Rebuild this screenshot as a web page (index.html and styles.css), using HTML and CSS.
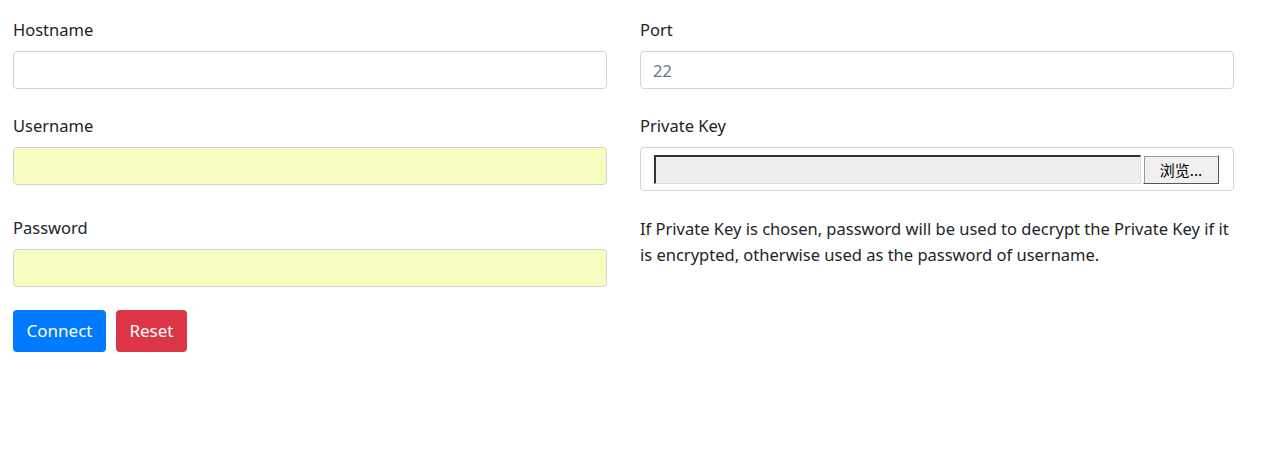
FILE: index.html
```html
<!DOCTYPE html>
<html>
<head>
<meta charset="utf-8">
<link rel="stylesheet" href="styles.css">
</head>
<body>
<form class="form">
  <div class="grid">
    <div class="group">
      <label class="label">Hostname</label>
      <input class="control" type="text">
    </div>
    <div class="group">
      <label class="label">Port</label>
      <input class="control" type="text" placeholder="22">
    </div>
    <div class="group">
      <label class="label">Username</label>
      <input class="control autofill" type="text">
    </div>
    <div class="group">
      <label class="label">Private Key</label>
      <div class="file-wrap">
        <span class="file-field"></span>
        <span class="file-btn">浏览...</span>
      </div>
    </div>
    <div class="group">
      <label class="label">Password</label>
      <input class="control autofill" type="password">
    </div>
    <div class="group">
      <p class="note">If Private Key is chosen, password will be used to decrypt the Private Key if it is encrypted, otherwise used as the password of username.</p>
    </div>
  </div>
  <div class="actions">
    <button type="button" class="btn btn-primary">Connect</button>
    <button type="button" class="btn btn-danger">Reset</button>
  </div>
</form>
</body>
</html>
```

FILE: styles.css
```css
* { box-sizing: border-box; }
html, body { margin: 0; background: #fff; }
body {
  font-family: "Noto Sans", "Open Sans", sans-serif;
  font-size: 16.5px;
  color: #212529;
  line-height: 24px;
}
.form {
  padding: 18px 46px 0 13px;
}
.grid {
  display: grid;
  grid-template-columns: 594px 594px;
  column-gap: 33px;
  row-gap: 25px;
}
.group { display: flex; flex-direction: column; }
.label {
  display: block;
  height: 24px;
  margin-bottom: 9px;
  font-size: 16.5px;
}
.control {
  display: block;
  width: 100%;
  height: 38px;
  padding: 6px 12px;
  font: inherit;
  color: #495057;
  background: #fff;
  border: 1px solid #ced4da;
  border-radius: 4px;
  outline: none;
}
.control::placeholder { color: #6c757d; }
.autofill { background: #f9fcc0; }
.file-wrap {
  display: flex;
  align-items: stretch;
  height: 44px;
  padding: 7px 14px 6px 13px;
  border: 1px solid #ced4da;
  border-radius: 4px;
  gap: 2px;
}
.file-field {
  flex: 1;
  background: #efefef;
  border-top: 2px solid #333;
  border-left: 2px solid #333;
  border-right: 1px solid #ddd;
  border-bottom: 1px solid #ddd;
}
.file-btn {
  width: 76px;
  display: flex;
  align-items: center;
  justify-content: center;
  font-family: "Noto Sans CJK SC", sans-serif;
  font-size: 15px;
  color: #000;
  background: #f0f0f0;
  border-top: 1px solid #fff;
  border-left: 1px solid #fff;
  border-right: 1px solid #555;
  border-bottom: 1px solid #555;
  box-shadow: 1px 1px 0 #999 inset;
}
.note {
  margin: 0;
  padding-top: 0;
  font-size: 16.5px;
  line-height: 26px;
}
.actions {
  display: flex;
  gap: 10px;
  margin-top: 23px;
}
.btn {
  height: 42px;
  padding: 0 12.5px;
  font: inherit;
  font-size: 17px;
  color: #fff;
  border: 1px solid transparent;
  border-radius: 4px;
}
.btn-primary { background: #007bff; }
.btn-danger { background: #dc3545; }
```
